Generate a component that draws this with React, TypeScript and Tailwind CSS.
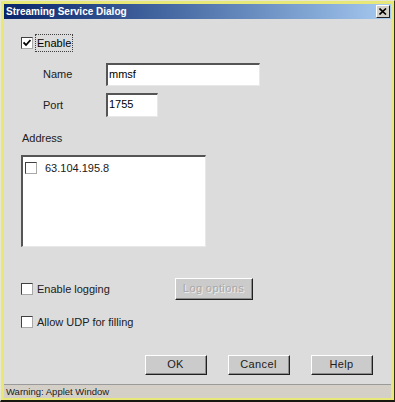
const font = "font-['Liberation_Sans',Arial,sans-serif]"

function Check({ checked = false }: { checked?: boolean }) {
  return (
    <span className="flex h-[12px] w-[12px] shrink-0 items-center justify-center border-t border-l border-t-[#404040] border-l-[#404040] border-r border-b border-r-[#a8a8a8] border-b-[#a8a8a8] bg-white">
      {checked && (
        <svg width="8" height="8" viewBox="0 0 8 8">
          <path d="M0.5 3.5 L3 6 L7.5 1" stroke="#000" strokeWidth="1.8" fill="none" />
        </svg>
      )}
    </span>
  )
}

function Button({ label, disabled = false, w = "w-[62px]" }: { label: string; disabled?: boolean; w?: string }) {
  return (
    <div className={`${w} h-[20px] border-t border-l border-t-white border-l-white border-r border-b border-r-[#202020] border-b-[#202020] bg-[#cbcbcb]`}>
      <div className="flex h-full items-center justify-center border-r border-b border-r-[#8c8c8c] border-b-[#8c8c8c]">
        <span
          className={`text-[11px] leading-none tracking-[0.4px] ${disabled ? "text-[#a8a8a8] [text-shadow:1px_1px_0_#f0f0f0]" : "text-[#202020]"}`}
        >
          {label}
        </span>
      </div>
    </div>
  )
}

function Field({ value, w, h }: { value: string; w: string; h: string }) {
  return (
    <div className={`${w} ${h} border-t-2 border-l-2 border-t-[#555] border-l-[#555] border-r border-b border-r-[#e8e8e8] border-b-[#e8e8e8] bg-white pl-[1px] pt-[1px]`}>
      <span className="text-[11px] leading-[14px] text-black">{value}</span>
    </div>
  )
}

export default function App() {
  return (
    <div className={`${font} h-[402px] w-[395px] border-t border-l border-t-[#e8e8d0] border-l-[#e8e8d0] border-r border-b-2 border-r-[#303020] border-b-[#181810] bg-[#e8e878] p-[3px] pb-[2px]`}>
      <div className="flex h-full flex-col">
        {/* title bar */}
        <div className="flex h-[15px] items-center justify-between bg-gradient-to-r from-[#0a246a] to-[#a6caf0] pl-[2px] pr-[1px]">
          <span className="text-[10px] font-bold leading-none text-white">Streaming Service Dialog</span>
          <div className="flex h-[13px] w-[14px] items-center justify-center border-t border-l border-t-white border-l-white border-r border-b border-r-[#202020] border-b-[#202020] bg-[#d4d0c8]">
            <svg width="8" height="7" viewBox="0 0 8 7">
              <path d="M0.5 0.5 L7 6.5 M7 0.5 L0.5 6.5" stroke="#000" strokeWidth="1.6" />
            </svg>
          </div>
        </div>

        {/* body */}
        <div className="flex flex-1 flex-col bg-[#dcdcdc] pl-[17px] text-[11px] text-[#202020]">
          <div className="mt-[15px] flex items-center gap-[2px]">
            <Check checked />
            <span className="border border-dotted border-[#404040] px-[1px] py-[1px] leading-[14px] text-black">Enable</span>
          </div>

          <div className="mt-[11px] flex items-center">
            <span className="w-[85px] pl-[22px]">Name</span>
            <Field value="mmsf" w="w-[154px]" h="h-[23px]" />
          </div>
          <div className="mt-[7px] flex items-center">
            <span className="w-[85px] pl-[22px]">Port</span>
            <Field value="1755" w="w-[52px]" h="h-[24px]" />
          </div>

          <span className="mt-[14px] pl-[1px] leading-[14px]">Address</span>

          <div className="mt-[10px] h-[92px] w-[185px] border-t-2 border-l-2 border-t-[#555] border-l-[#555] border-r border-b border-r-[#e8e8e8] border-b-[#e8e8e8] bg-white pl-[2px] pt-[4px]">
            <div className="flex items-center gap-[8px]">
              <Check />
              <span className="leading-[14px]">63.104.195.8</span>
            </div>
          </div>

          <div className="mt-[31px] flex items-center">
            <div className="flex w-[154px] items-center gap-[4px]">
              <Check />
              <span>Enable logging</span>
            </div>
            <Button label="Log options" disabled w="w-[78px] !h-[22px]" />
          </div>

          <div className="mt-[14px] flex items-center gap-[4px]">
            <Check />
            <span>Allow UDP for filling</span>
          </div>

          <div className="mt-[24px] flex gap-[21px] pl-[124px]">
            <Button label="OK" />
            <Button label="Cancel" />
            <Button label="Help" />
          </div>
        </div>

        {/* status bar */}
        <div className="flex h-[14px] items-center border-t border-t-[#9a9a9a] bg-[#d4d0c8] pl-[2px]">
          <span className="text-[9.5px] leading-none text-[#202020]">Warning: Applet Window</span>
        </div>
      </div>
    </div>
  )
}
